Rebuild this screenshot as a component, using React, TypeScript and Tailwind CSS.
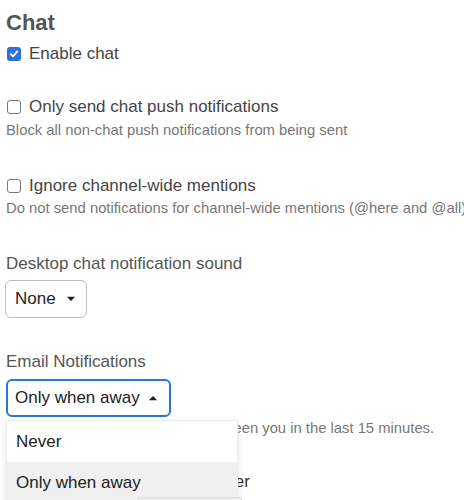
import React from "react";

function Box({ checked }: { checked?: boolean }) {
  if (checked) {
    return (
      <span className="mt-[3px] flex h-[14px] w-[14px] shrink-0 items-center justify-center rounded-[3px] bg-[#2f6fe0]">
        <svg width="10" height="10" viewBox="0 0 10 10">
          <path d="M1.8 5.2 L4 7.4 L8.3 2.4" fill="none" stroke="#fff" strokeWidth="1.8" strokeLinecap="round" strokeLinejoin="round" />
        </svg>
      </span>
    );
  }
  return <span className="mt-[3px] h-[14px] w-[14px] shrink-0 rounded-[3px] border-[1.5px] border-[#77777d] bg-white" />;
}

function Caret({ up }: { up?: boolean }) {
  return (
    <svg width="10" height="6" viewBox="0 0 10 6" className="shrink-0">
      {up ? <path d="M0.8 5.2 L5 0.9 L9.2 5.2 Z" fill="#222" /> : <path d="M0.8 0.8 L5 5.1 L9.2 0.8 Z" fill="#222" />}
    </svg>
  );
}

export default function App() {
  return (
    <div className="relative h-[500px] w-[464px] overflow-hidden bg-white font-['Liberation_Sans',Arial,sans-serif]">
      <div className="px-[6px] pt-[10px]">
        <h3 className="text-[22px] font-bold leading-[26px] text-[#555]">Chat</h3>

        <label className="mt-[8px] flex items-start gap-[8px] pl-[1px] text-[17px] leading-[20px] text-[#444]">
          <Box checked />
          <span>Enable chat</span>
        </label>

        <label className="mt-[33px] flex items-start gap-[8px] pl-[1px] text-[17px] leading-[20px] text-[#444]">
          <Box />
          <span>Only send chat push notifications</span>
        </label>
        <p className="mt-[4px] whitespace-nowrap text-[14.8px] leading-[18px] text-[#777]">
          Block all non-chat push notifications from being sent
        </p>

        <label className="mt-[37px] flex items-start gap-[8px] pl-[1px] text-[17px] leading-[20px] text-[#444]">
          <Box />
          <span>Ignore channel-wide mentions</span>
        </label>
        <p className="mt-[3px] whitespace-nowrap text-[14.8px] leading-[18px] text-[#777]">
          Do not send notifications for channel-wide mentions (@here and @all)
        </p>

        <p className="mt-[37px] text-[17px] leading-[20px] text-[#555]">Desktop chat notification sound</p>
        <button className="-ml-[1px] mt-[6px] flex h-[38px] w-[82px] items-center gap-[10px] rounded-[6px] border border-[#bdbdbd] bg-white pl-[9px] text-[17px] leading-[20px] text-[#222]">
          <span>None</span>
          <Caret />
        </button>

        <p className="mt-[34px] text-[17px] leading-[20px] text-[#555]">Email Notifications</p>
        <button className="mt-[7px] flex h-[38px] w-[165px] items-center gap-[8px] rounded-[6px] border-2 border-[#2a74d4] bg-white pl-[7px] text-[17px] leading-[20px] text-[#222]">
          <span>Only when away</span>
          <Caret up />
        </button>
        <p className="mt-[2px] whitespace-nowrap text-[14.8px] leading-[18px] text-[#777]">
          We'll only email you if we haven't seen you in the last 15 minutes.
        </p>

        <p className="mt-[35px] whitespace-nowrap text-[17px] leading-[20px] text-[#333]">Show activity indicator in header</p>
      </div>

      <ul className="absolute left-[6px] top-[420px] w-[232px] border border-[#ececec] bg-white text-[17px] leading-[20px] text-[#222] shadow-[0_2px_6px_rgba(0,0,0,0.12)]">
        <li className="flex h-[41px] items-center pl-[9px]">Never</li>
        <li className="flex h-[42px] items-center bg-[#f0f0f0] pl-[9px]">Only when away</li>
      </ul>

      <div className="absolute left-[138px] top-[497px] h-[10px] w-[104px] rounded-[2px] border border-[#dcdcdc] bg-[#ececec]" />
    </div>
  );
}
